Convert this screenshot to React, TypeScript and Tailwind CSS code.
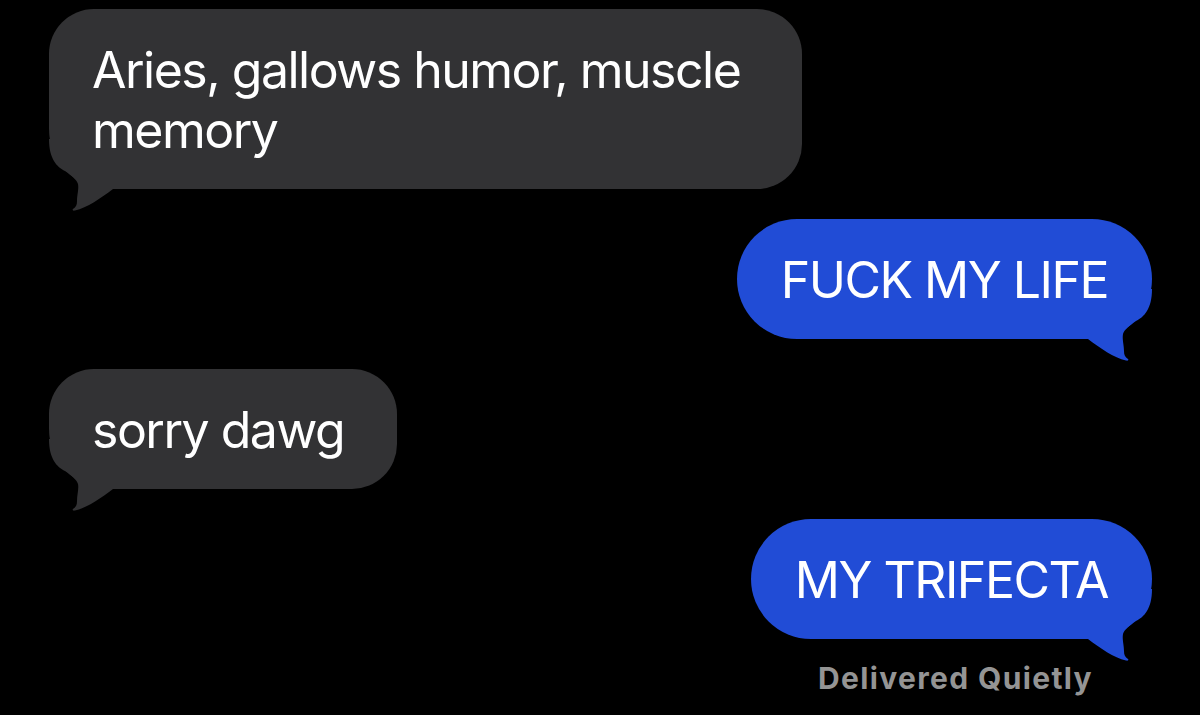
import type { ReactNode } from 'react';

type Side = 'left' | 'right';

interface Message {
  text: ReactNode;
  side: Side;
  /** fixed bubble width where the screenshot's bubble is wider than its text */
  width?: string;
}

const messages: Message[] = [
  { text: 'Aries, gallows humor, muscle memory', side: 'left' },
  { text: 'FUCK MY LIFE', side: 'right' },
  { text: 'sorry dawg', side: 'left', width: 'w-[348px]' },
  { text: 'MY TRIFECTA', side: 'right' }
];

// iMessage-style hook drawn over the bubble's bottom corner
function Tail({ side }: { side: Side }) {
  const path =
    'M40 0 L0 0 C0 20 8 28 16 32 C22 36 28 41 29 45 C30 50 28 56 28 62 C28 66 27 68 24 70 C23 71 24 72 26 71.5 C38 69 52 59 64 50 L64 0 Z';
  return (
    <svg
      width="70"
      height="72"
      viewBox="0 0 70 72"
      className={side === 'left' ? 'absolute -bottom-[22px] left-0' : 'absolute -bottom-[22px] right-0'}
      aria-hidden="true"
    >
      <g transform={side === 'right' ? 'translate(70 0) scale(-1 1)' : undefined}>
        <path d={path} fill="currentColor" />
      </g>
    </svg>
  );
}

function Bubble({ text, side, width }: Message) {
  const isLeft = side === 'left';
  return (
    <div
      className={[
        isLeft
          ? 'relative max-w-[753px] self-start rounded-[45px] rounded-bl-[60px] bg-[#323234] pt-[31px] pb-[29px] pl-[43px] pr-[44px] text-[#323234]'
          : 'relative self-end rounded-[60px] bg-[#214cd6] pt-[31px] pb-[29px] pl-[44px] pr-[44px] text-[#214cd6]',
        width ?? ''
      ].join(' ')}
    >
      <Tail side={side} />
      <p className="relative text-[50px] leading-[60px] tracking-[-0.03em] text-white">{text}</p>
    </div>
  );
}

export default function App() {
  return (
    <div
      className="flex h-[715px] w-full flex-col gap-[30px] overflow-hidden bg-black pt-[9px] pl-[49px] pr-[48px]"
      style={{ fontFamily: 'Inter, "Noto Sans", sans-serif' }}
    >
      {messages.map((m, i) => (
        <Bubble key={i} {...m} />
      ))}
      <p className="-mt-[9px] mr-[59px] self-end text-[30px] font-bold leading-[36px] tracking-[0.045em] text-[#949494]">
        Delivered Quietly
      </p>
    </div>
  );
}
